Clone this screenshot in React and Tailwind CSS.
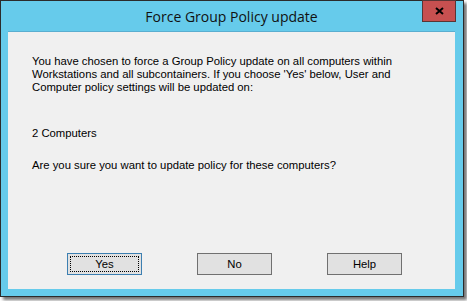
import React from "react";

const body = { fontFamily: '"Liberation Sans", Arial, sans-serif' };

const Button = ({ label, isDefault }) => (
  <button
    type="button"
    className={`w-[75px] h-[22px] bg-[#e1e1e1] border text-[11.3px] text-[#000] flex items-center justify-center p-[2px] ${
      isDefault ? "border-[#3c7fb1]" : "border-[#707070]"
    }`}
    style={body}
  >
    <span
      className={`w-full h-full flex items-center justify-center ${
        isDefault ? "border border-dotted border-black" : ""
      }`}
    >
      {label}
    </span>
  </button>
);

export default function App() {
  return (
    <div className="w-[467px] h-[301px] bg-white">
      <div className="relative w-[464px] h-[297px] border border-[#2b2b2b] bg-[#66cbeb] shadow-[3px_3px_3px_rgba(0,0,0,0.55)] flex flex-col pl-[7px] pr-[8px]">
        {/* title bar */}
        <div
          className="h-[30px] flex items-center justify-center text-[14px] text-[#111]"
          style={{ fontFamily: '"Open Sans", "Noto Sans", sans-serif' }}
        >
          Force Group Policy update
        </div>
        <div className="absolute top-[-1px] right-[7px] w-[34px] h-[22px] bg-[#c75050] border border-[#5a3535] flex items-center justify-center">
          <svg width="9" height="8" viewBox="0 0 9 8">
            <path d="M1 1 L8 7 M8 1 L1 7" stroke="#000" strokeWidth="2" />
          </svg>
        </div>

        {/* client area */}
        <div className="h-[258px] bg-[#f0f0f0] border-t border-[#5aaed0] flex flex-col pl-[24px] text-[11.3px] text-[#000]" style={body}>
          <div className="mt-[23px] leading-[13px]">
            <p>You have chosen to force a Group Policy update on all computers within</p>
            <p>Workstations and all subcontainers. If you choose 'Yes' below, User and</p>
            <p>Computer policy settings will be updated on:</p>
          </div>
          <p className="mt-[33px] leading-[13px]">2 Computers</p>
          <p className="mt-[19px] leading-[13px]">Are you sure you want to update policy for these computers?</p>
          <div className="mt-[81px] ml-[35px] flex gap-[55px]">
            <Button label="Yes" isDefault />
            <Button label="No" />
            <Button label="Help" />
          </div>
        </div>
      </div>
    </div>
  );
}
